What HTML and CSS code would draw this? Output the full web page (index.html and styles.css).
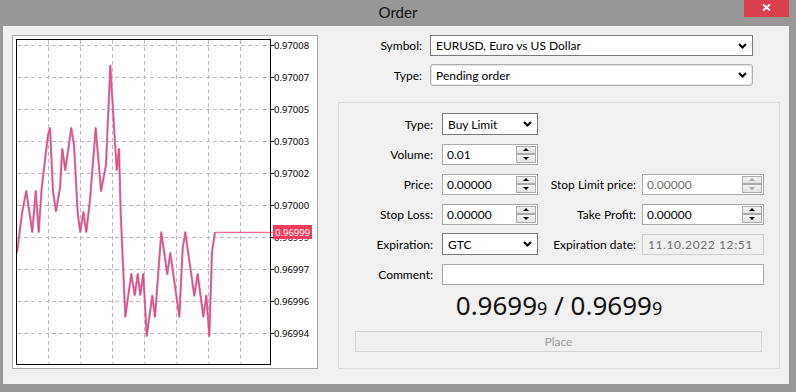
FILE: index.html
```html
<!DOCTYPE html>
<html lang="en">
<head>
    <meta charset="UTF-8">
    <title>Order</title>
    <link rel="stylesheet" href="styles.css">
</head>
<body>

<div class="window">

    <!-- Title bar -->
    <div class="titlebar">
        <span></span>
        <span class="title">Order</span>
        <button class="close" type="button">
            <svg width="9" height="7" viewBox="0 0 9 7"><path d="M1 0.5 L8 6.5 M8 0.5 L1 6.5" stroke="#fff" stroke-width="1.8"/></svg>
        </button>
    </div>

    <div class="content">

        <!-- Tick chart -->
        <div class="chart-panel">
            <svg width="304" height="332" viewBox="13 36 304 332">
                <g class="grid">
                    <line x1="48.5" y1="40" x2="48.5" y2="364"/>
                    <line x1="80.5" y1="40" x2="80.5" y2="364"/>
                    <line x1="112.5" y1="40" x2="112.5" y2="364"/>
                    <line x1="144.5" y1="40" x2="144.5" y2="364"/>
                    <line x1="176.5" y1="40" x2="176.5" y2="364"/>
                    <line x1="208.5" y1="40" x2="208.5" y2="364"/>
                    <line x1="240.5" y1="40" x2="240.5" y2="364"/>
                    <line x1="17" y1="45.5" x2="270" y2="45.5"/>
                    <line x1="17" y1="77.5" x2="270" y2="77.5"/>
                    <line x1="17" y1="109.5" x2="270" y2="109.5"/>
                    <line x1="17" y1="141.5" x2="270" y2="141.5"/>
                    <line x1="17" y1="173.5" x2="270" y2="173.5"/>
                    <line x1="17" y1="205.5" x2="270" y2="205.5"/>
                    <line x1="17" y1="237.5" x2="270" y2="237.5"/>
                    <line x1="17" y1="269.5" x2="270" y2="269.5"/>
                    <line x1="17" y1="301.5" x2="270" y2="301.5"/>
                    <line x1="17" y1="333.5" x2="270" y2="333.5"/>
                </g>
                <g class="ticks">
                    <line x1="270" y1="45.5" x2="274" y2="45.5"/>
                    <line x1="270" y1="77.5" x2="274" y2="77.5"/>
                    <line x1="270" y1="109.5" x2="274" y2="109.5"/>
                    <line x1="270" y1="141.5" x2="274" y2="141.5"/>
                    <line x1="270" y1="173.5" x2="274" y2="173.5"/>
                    <line x1="270" y1="205.5" x2="274" y2="205.5"/>
                    <line x1="270" y1="237.5" x2="274" y2="237.5"/>
                    <line x1="270" y1="269.5" x2="274" y2="269.5"/>
                    <line x1="270" y1="301.5" x2="274" y2="301.5"/>
                    <line x1="270" y1="333.5" x2="274" y2="333.5"/>
                </g>
                <g class="axis-labels">
                    <text x="274" y="49">0.97008</text>
                    <text x="274" y="81">0.97007</text>
                    <text x="274" y="113">0.97005</text>
                    <text x="274" y="145">0.97003</text>
                    <text x="274" y="177">0.97002</text>
                    <text x="274" y="209">0.97000</text>
                    <text x="274" y="241">0.96999</text>
                    <text x="274" y="273">0.96997</text>
                    <text x="274" y="305">0.96996</text>
                    <text x="274" y="337">0.96994</text>
                </g>

                <!-- ask / bid lines -->
                <polyline class="ask" points="17,252.7 22,213 26.3,191 32.3,232 35.7,191 38.7,232 41.7,188 48,135 50,128 53,192 56,211 60,188 62.3,149 65.3,170 71.3,128 74,145 77.7,213 80.3,232 83.3,212 86.3,232 90,200 95.7,128 101,191 106,165 110.3,65.7 116.7,170 119,149 120.7,213 125.3,316.7 131.3,274 134.7,295 137.7,274 140.3,295 143.3,274 146.7,336 152.3,295.7 155,316.7 161.3,232.3 167.3,274 170.3,253 179.3,316.7 182.7,248 185.3,232.3 194.3,295.7 197.7,274 203.3,316.7 206.3,295.7 209.3,336 212,251.7 215,232.3"/>
                <polyline class="bid" points="17,252.7 22,213 26.3,191 32.3,232 35.7,191 38.7,232 41.7,188 48,135 50,128 53,192 56,211 60,188 62.3,149 65.3,170 71.3,128 74,145 77.7,213 80.3,232 83.3,212 86.3,232 90,200 95.7,128 101,191 106,165 110.3,65.7 116.7,170 119,149 120.7,213 125.3,316.7 131.3,274 134.7,295 137.7,274 140.3,295 143.3,274 146.7,336 152.3,295.7 155,316.7 161.3,232.3 167.3,274 170.3,253 179.3,316.7 182.7,248 185.3,232.3 194.3,295.7 197.7,274 203.3,316.7 206.3,295.7 209.3,336 212,251.7 215,232.3 273,232.3"/>

                <rect class="frame" x="16.5" y="39.5" width="254" height="325"/>

                <!-- current price tag -->
                <rect class="tag" x="273" y="225" width="39" height="14"/>
                <text class="tag-text" x="275" y="235.5">0.96999</text>
            </svg>
        </div>

        <!-- Order form -->
        <div class="form">
            <div class="top-grid">
                <label>Symbol:</label>
                <div class="select">
                    <span>EURUSD, Euro vs US Dollar</span>
                    <svg class="chevron" width="9" height="6" viewBox="0 0 9 6"><polyline points="1,1 4.5,4.5 8,1"/></svg>
                </div>
                <label>Type:</label>
                <div class="select pending">
                    <span>Pending order</span>
                    <svg class="chevron" width="9" height="6" viewBox="0 0 9 6"><polyline points="1,1 4.5,4.5 8,1"/></svg>
                </div>
            </div>

            <div class="group">
                <div class="order-grid">
                    <label>Type:</label>
                    <div class="select small">
                        <span>Buy Limit</span>
                        <svg class="chevron" width="9" height="6" viewBox="0 0 9 6"><polyline points="1,1 4.5,4.5 8,1"/></svg>
                    </div>
                    <span></span><span></span>

                    <label>Volume:</label>
                    <div class="spin-field">
                        <input type="text" value="0.01">
                        <div class="spinner"><span class="up"></span><span class="down"></span></div>
                    </div>
                    <span></span><span></span>

                    <label>Price:</label>
                    <div class="spin-field">
                        <input type="text" value="0.00000">
                        <div class="spinner"><span class="up"></span><span class="down"></span></div>
                    </div>
                    <label class="right">Stop Limit price:</label>
                    <div class="spin-field disabled">
                        <input type="text" value="0.00000" disabled>
                        <div class="spinner"><span class="up"></span><span class="down"></span></div>
                    </div>

                    <label>Stop Loss:</label>
                    <div class="spin-field">
                        <input type="text" value="0.00000">
                        <div class="spinner"><span class="up"></span><span class="down"></span></div>
                    </div>
                    <label class="right">Take Profit:</label>
                    <div class="spin-field">
                        <input type="text" value="0.00000">
                        <div class="spinner"><span class="up"></span><span class="down"></span></div>
                    </div>

                    <label>Expiration:</label>
                    <div class="select small">
                        <span>GTC</span>
                        <svg class="chevron" width="9" height="6" viewBox="0 0 9 6"><polyline points="1,1 4.5,4.5 8,1"/></svg>
                    </div>
                    <label class="right">Expiration date:</label>
                    <div class="date-field">11.10.2022 12:51</div>

                    <label>Comment:</label>
                    <input class="comment" type="text" value="">
                </div>

                <div class="price">0.9699<small>9</small> / 0.9699<small>9</small></div>

                <button class="place" type="button" disabled>Place</button>
            </div>
        </div>

    </div>
</div>

</body>
</html>
```

FILE: styles.css
```css
body {
    margin: 0;
    padding: 0;
    background-color: #979797;
    font-family: Lato, "Noto Sans", sans-serif;
    font-size: 12px;
    color: #000;
}
.window {
    width: 796px;
    height: 392px;
}
.titlebar {
    height: 26px;
    display: grid;
    grid-template-columns: 1fr auto 1fr;
}
.title {
    font-size: 15px;
    line-height: 24px;
    color: #111;
}
.close {
    justify-self: end;
    width: 45px;
    height: 17px;
    margin-right: 7px;
    padding: 0;
    border: none;
    background-color: #d8404e;
    display: flex;
    align-items: center;
    justify-content: center;
}
.close svg {
    display: block;
    margin-top: -3px;
}
.content {
    margin: 0 7px 0 3px;
    height: 358px;
    box-sizing: border-box;
    padding: 9px 9px 0 9px;
    background-color: #f0f0f0;
    display: flex;
    gap: 20px;
}

/* chart */
.chart-panel {
    width: 306px;
    height: 334px;
    box-sizing: border-box;
    border: 1px solid #a6a6a6;
    background-color: #fff;
}
.chart-panel svg {
    display: block;
}
.grid line {
    stroke: #b9b9b9;
    stroke-width: 1;
    stroke-dasharray: 4 3;
}
.ticks line {
    stroke: #000;
    stroke-width: 1;
}
.axis-labels text,
.tag-text {
    font-family: "Noto Sans", sans-serif;
    font-size: 9.5px;
    fill: #000;
}
.frame {
    fill: none;
    stroke: #000;
    stroke-width: 1;
}
.ask {
    fill: none;
    stroke: #bd86c6;
    stroke-width: 2.2;
    stroke-linejoin: round;
}
.bid {
    fill: none;
    stroke: #ff3a60;
    stroke-width: 0.9;
}
.tag {
    fill: #f23c5a;
}
.tag-text {
    fill: #fff;
}

/* form */
.form {
    width: 442px;
}
label {
    text-align: right;
    align-self: center;
}
.top-grid {
    display: grid;
    grid-template-columns: 84px 323px;
    grid-template-rows: 21px 22px;
    column-gap: 8px;
    row-gap: 8px;
}
.select {
    display: flex;
    align-items: center;
    box-sizing: border-box;
    border: 1px solid #7a7a7a;
    background-color: #fff;
    padding: 0 5px 0 5px;
}
.select span {
    flex: 1;
}
.select.pending {
    border-color: #b0b0b0;
    border-radius: 3px;
    box-shadow: inset 0 0 0 1px #e4e4e4;
}
.chevron polyline {
    fill: none;
    stroke: #000;
    stroke-width: 2;
}
.group {
    margin-top: 16px;
    height: 267px;
    box-sizing: border-box;
    border: 1px solid #dadada;
    padding-top: 10px;
}
.order-grid {
    display: grid;
    grid-template-columns: 103px 96px 104px 122px;
    grid-auto-rows: 22px;
    row-gap: 8px;
}
.order-grid label {
    padding-right: 9px;
}
.order-grid label.right {
    padding-right: 6px;
}
.select.small {
    height: 22px;
}
.spin-field {
    display: flex;
    height: 21px;
    align-self: center;
    box-sizing: border-box;
    border: 1px solid #a9a9a9;
    background-color: #fff;
}
input {
    font-family: inherit;
    font-size: 12px;
    color: #000;
}
.spin-field input {
    flex: 1;
    min-width: 0;
    border: none;
    padding: 0 0 0 4px;
    background: transparent;
}
.spinner {
    width: 20px;
    margin: 1px;
    display: flex;
    flex-direction: column;
}
.spinner span {
    flex: 1;
    border: 1px solid #acacac;
    background: linear-gradient(#f4f4f4, #e3e3e3);
    display: flex;
    align-items: center;
    justify-content: center;
}
.spinner span::after {
    content: "";
    border-left: 3px solid transparent;
    border-right: 3px solid transparent;
}
.spinner .up::after {
    border-bottom: 3px solid #000;
}
.spinner .down::after {
    border-top: 3px solid #000;
}
.spin-field.disabled input {
    color: #6d6d6d;
}
.spin-field.disabled .spinner .up::after {
    border-bottom-color: #a6a6a6;
}
.spin-field.disabled .spinner .down::after {
    border-top-color: #a6a6a6;
}
.date-field {
    height: 21px;
    align-self: center;
    box-sizing: border-box;
    border: 1px solid #cccccc;
    padding-left: 5px;
    line-height: 19px;
    color: #6d6d6d;
    letter-spacing: 0.6px;
}
.comment {
    grid-column: 2 / 5;
    height: 21px;
    align-self: center;
    box-sizing: border-box;
    border: 1px solid #a9a9a9;
    padding: 0 4px;
}
.price {
    margin-top: 5px;
    text-align: center;
    font-family: "Noto Sans", sans-serif;
    font-size: 26px;
    line-height: 30px;
    color: #111;
}
.price small {
    font-size: 18px;
}
.place {
    display: block;
    width: 407px;
    height: 21px;
    margin: 8px 0 0 16px;
    border: 1px solid #d4d4d4;
    background-color: #efefef;
    color: #9c9c9c;
    font-family: inherit;
    font-size: 12px;
}
```
